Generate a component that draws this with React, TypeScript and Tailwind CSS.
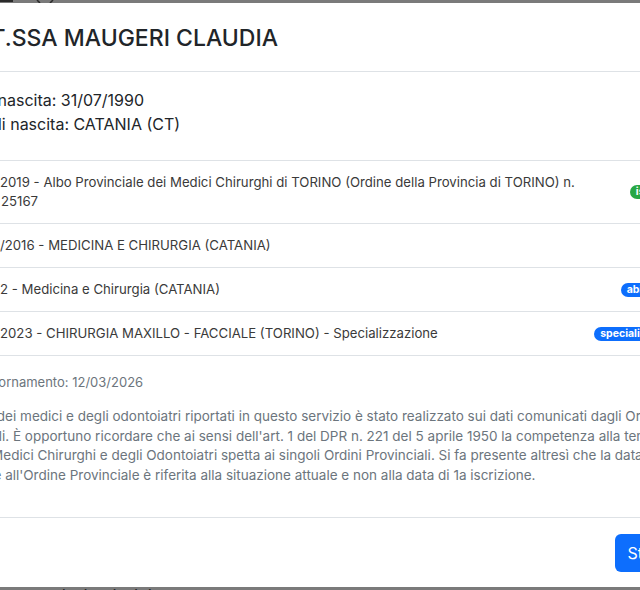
import React from "react";

type Row = { date: string; text: string; badge: string; color: string };

const rows: Row[] = [
  {
    date: "12/09/",
    text: "2019 - Albo Provinciale dei Medici Chirurghi di TORINO (Ordine della Provincia di TORINO) n. 25167",
    badge: "iscrizione",
    color: "bg-[#28a745]",
  },
  { date: "22/07", text: "/2016 - MEDICINA E CHIRURGIA (CATANIA)", badge: "laurea", color: "bg-[#0d6efd]" },
  { date: "2016/", text: "2 - Medicina e Chirurgia (CATANIA)", badge: "abilitazione", color: "bg-[#0d6efd]" },
  {
    date: "18/07/",
    text: "2023 - CHIRURGIA MAXILLO - FACCIALE (TORINO) - Specializzazione",
    badge: "specializzazione",
    color: "bg-[#0d6efd]",
  },
];

export default function App() {
  return (
    <div
      className="w-[640px] h-[590px] overflow-hidden bg-[#7a7a7a] flex flex-col"
      style={{ fontFamily: "Inter, 'Noto Sans', sans-serif" }}
    >
      <div className="h-[3px] shrink-0 flex items-start gap-[22px] overflow-hidden">
        <div className="w-[13px] h-[2px] bg-[#2a2a2a]" />
        <svg width="20" height="3" viewBox="0 0 20 3" className="shrink-0">
          <path d="M2 0 L5 3 M18 0 L15 3" stroke="#2a2a2a" strokeWidth="1.5" fill="none" />
        </svg>
      </div>
      <div className="ml-[-76px] w-[800px] shrink-0 bg-white rounded-[6px] flex flex-col">
        <div className="pl-[18px] pr-4 pt-[18px] pb-4 border-b border-[#dee2e6]">
          <h4 className="text-[23px] leading-[34px] font-medium text-[#212529] whitespace-nowrap">
            DOTT.SSA MAUGERI CLAUDIA
          </h4>
        </div>
        <div className="px-4 pt-4 pb-4">
          <div className="text-[16px] leading-6 text-[#212529] mb-6">
            <div>Data di nascita: 31/07/1990</div>
            <div>Luogo di nascita: CATANIA (CT)</div>
          </div>
          <div className="border-t border-[#dee2e6]">
            {rows.map((r) => (
              <div
                key={r.badge}
                className="flex items-center justify-between gap-2 pl-[61px] pr-4 py-3 border-b border-[#dee2e6]"
              >
                <div className="max-w-[590px] indent-[-41px] text-[13.2px] leading-[19px] text-[#3a3a3a]">
                  <span className="inline-block w-[40px] indent-0 text-right">{r.date}</span>
                  {r.text}
                </div>
                <span
                  className={`${r.color} shrink-0 rounded-full px-[6px] text-[10.5px] leading-[14px] font-bold text-white`}
                >
                  {r.badge}
                </span>
              </div>
            ))}
          </div>
          <div className="mt-4 text-[13px] leading-5 text-[#6c757d]">Data aggiornamento: 12/03/2026</div>
          <p className="mt-[15px] mb-4 text-[13.5px] leading-[19.6px] text-[#6c757d] whitespace-nowrap">
            L'elenco dei medici e degli odontoiatri riportati in questo servizio è stato realizzato sui dati comunicati dagli Ordini
            <br />
            Provinciali. È opportuno ricordare che ai sensi dell'art. 1 del DPR n. 221 del 5 aprile 1950 la competenza alla tenuta degli
            <br />
            Albi dei Medici Chirurghi e degli Odontoiatri spetta ai singoli Ordini Provinciali. Si fa presente altresì che la data di
            <br />
            iscrizione all'Ordine Provinciale è riferita alla situazione attuale e non alla data di 1a iscrizione.
          </p>
        </div>
        <div className="border-t border-[#dee2e6] flex justify-end pt-4 pb-[15px] pr-[27px]">
          <button className="h-[38px] px-3 rounded-[6px] bg-[#0d6efd] text-white text-[16px]">Stampa</button>
        </div>
      </div>
      <div className="shrink-0 ml-[-34px] mt-[1px] text-[15px] leading-[16px] text-[#262626] whitespace-nowrap">
        rispetto delle indicazioni riportate:
      </div>
    </div>
  );
}
